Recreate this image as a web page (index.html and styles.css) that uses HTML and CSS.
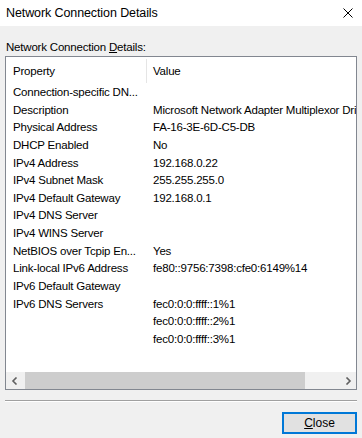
FILE: index.html
```html
<!DOCTYPE html>
<html lang="en">
<head>
    <meta charset="UTF-8" />
    <title>Network Connection Details</title>
    <link rel="stylesheet" href="styles.css">
</head>
<body>
    <div class="dialog">
        <div class="titlebar">
            <span class="title">Network Connection Details</span>
            <svg class="close-x" width="10" height="10" viewBox="0 0 10 10">
                <path d="M0.5 0.5 L9.5 9.5 M9.5 0.5 L0.5 9.5" stroke="#000" stroke-width="1" fill="none"/>
            </svg>
        </div>

        <div class="content">
            <div class="label">Network Connection <u>D</u>etails:</div>

            <div class="listbox">
                <div class="list-header">
                    <div class="col-prop">Property</div>
                    <div class="col-val">Value</div>
                </div>

                <div class="list-rows">
                    <div class="row"><div class="col-prop">Connection-specific DN...</div><div class="col-val"></div></div>
                    <div class="row"><div class="col-prop">Description</div><div class="col-val">Microsoft Network Adapter Multiplexor Driver</div></div>
                    <div class="row"><div class="col-prop">Physical Address</div><div class="col-val">FA-16-3E-6D-C5-DB</div></div>
                    <div class="row"><div class="col-prop">DHCP Enabled</div><div class="col-val">No</div></div>
                    <div class="row"><div class="col-prop">IPv4 Address</div><div class="col-val">192.168.0.22</div></div>
                    <div class="row"><div class="col-prop">IPv4 Subnet Mask</div><div class="col-val">255.255.255.0</div></div>
                    <div class="row"><div class="col-prop">IPv4 Default Gateway</div><div class="col-val">192.168.0.1</div></div>
                    <div class="row"><div class="col-prop">IPv4 DNS Server</div><div class="col-val"></div></div>
                    <div class="row"><div class="col-prop">IPv4 WINS Server</div><div class="col-val"></div></div>
                    <div class="row"><div class="col-prop">NetBIOS over Tcpip En...</div><div class="col-val">Yes</div></div>
                    <div class="row"><div class="col-prop">Link-local IPv6 Address</div><div class="col-val">fe80::9756:7398:cfe0:6149%14</div></div>
                    <div class="row"><div class="col-prop">IPv6 Default Gateway</div><div class="col-val"></div></div>
                    <div class="row"><div class="col-prop">IPv6 DNS Servers</div><div class="col-val">fec0:0:0:ffff::1%1</div></div>
                    <div class="row"><div class="col-prop"></div><div class="col-val">fec0:0:0:ffff::2%1</div></div>
                    <div class="row"><div class="col-prop"></div><div class="col-val">fec0:0:0:ffff::3%1</div></div>
                </div>

                <div class="hscroll">
                    <div class="arrow">
                        <svg width="8" height="8" viewBox="0 0 8 8"><path d="M5.5 0.5 L2 4 L5.5 7.5" stroke="#606060" stroke-width="1.6" fill="none"/></svg>
                    </div>
                    <div class="track"><div class="thumb"></div></div>
                    <div class="arrow">
                        <svg width="8" height="8" viewBox="0 0 8 8"><path d="M2.5 0.5 L6 4 L2.5 7.5" stroke="#606060" stroke-width="1.6" fill="none"/></svg>
                    </div>
                </div>
            </div>

            <div class="separator"></div>

            <div class="buttons">
                <button class="btn-close"><u>C</u>lose</button>
            </div>
        </div>
    </div>
</body>
</html>
```

FILE: styles.css
```css
* {
    margin: 0;
    padding: 0;
    box-sizing: border-box;
}

body {
    width: 362px;
    height: 438px;
    overflow: hidden;
    background: #f0f0f0;
    font-family: 'Liberation Sans', Arial, sans-serif;
    font-size: 11.5px;
    letter-spacing: -0.2px;
    color: #000;
}

/* Title bar */
.titlebar {
    height: 26px;
    background: #ffffff;
    display: flex;
    align-items: center;
    justify-content: space-between;
    padding: 0 9px 0 6px;
}

.title {
    font-size: 12.5px;
    letter-spacing: -0.1px;
}

/* Content */
.content {
    padding: 0 5px;
}

.label {
    margin-top: 13px;
    line-height: 16px;
    margin-left: 1px;
    margin-bottom: 1px;
}

.label u {
    text-underline-offset: 1px;
}

/* List view */
.listbox {
    height: 334px;
    background: #ffffff;
    border: 1px solid #828790;
    display: flex;
    flex-direction: column;
    overflow: hidden;
}

.list-header,
.row {
    display: grid;
    grid-template-columns: 141px 1fr;
    white-space: nowrap;
}

.list-header {
    height: 27px;
    align-items: center;
}

.list-header .col-prop {
    border-right: 1px solid #e5e5e5;
    height: 24px;
    line-height: 24px;
}

.col-prop {
    padding-left: 7px;
    overflow: hidden;
}

.col-val {
    padding-left: 6px;
    overflow: hidden;
}

.list-rows {
    flex: 1;
}

.row {
    height: 17.65px;
    line-height: 17.65px;
}

/* Horizontal scroll bar */
.hscroll {
    height: 17px;
    display: flex;
    background: #f0f0f0;
}

.arrow {
    width: 17px;
    display: flex;
    align-items: center;
    justify-content: center;
}

.track {
    flex: 1;
    padding: 0 34px 0 2px;
    display: flex;
}

.thumb {
    flex: 1;
    background: #cdcdcd;
}

/* Bottom */
.separator {
    margin-top: 10px;
    height: 2px;
    border-top: 1px solid #a0a0a0;
    border-bottom: 1px solid #ffffff;
}

.buttons {
    display: flex;
    justify-content: flex-end;
    margin-top: 10px;
}

.btn-close {
    width: 75px;
    height: 22px;
    background: #e1e1e1;
    border: 2px solid #0078d7;
    font-family: 'Liberation Sans', Arial, sans-serif;
    font-size: 12px;
    color: #000;
}
```
